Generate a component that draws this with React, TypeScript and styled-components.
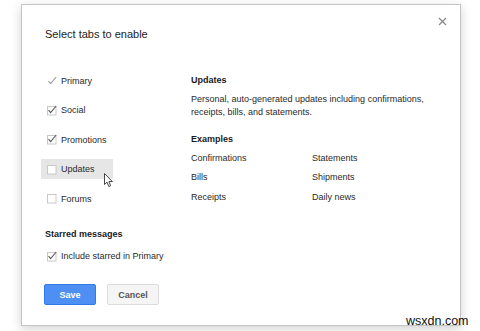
import React from "react";
import styled, { createGlobalStyle } from "styled-components";

const Global = createGlobalStyle`
  html, body { margin: 0; padding: 0; background: #ffffff; }
  body { font-family: "Liberation Sans", Arial, sans-serif; }
`;

const Page = styled.div`
  position: relative;
  width: 480px;
  height: 331px;
  overflow: hidden;
  background: #ffffff;
  padding: 4px 0 0 21px;
  box-sizing: border-box;
`;

const Dialog = styled.div`
  position: relative;
  box-sizing: border-box;
  width: 440px;
  height: 322px;
  background: #fff;
  border: 1px solid #c4c4c4;
  box-shadow: 0 3px 10px rgba(0, 0, 0, 0.18);
  padding: 22px 20px 0 23px;
  display: flex;
  flex-direction: column;
  color: #222;
`;

const Title = styled.div`
  font-size: 11px;
  line-height: 14px;
  color: #222;
`;

const Close = styled.div`
  position: absolute;
  top: 12px;
  right: 13px;
  width: 9px;
  height: 9px;
  display: flex;
`;

const Body = styled.div`
  margin-top: 30px;
  display: grid;
  grid-template-columns: 146px 1fr;
`;

const TabList = styled.div`
  display: flex;
  flex-direction: column;
  align-items: flex-start;
  gap: 9.4px;
`;

const Option = styled.div<{ $hover?: boolean }>`
  position: relative;
  display: inline-flex;
  align-items: center;
  gap: 4px;
  height: 20px;
  margin-left: -4px;
  padding: 0 18px 0 5px;
  background: ${(p) => (p.$hover ? "#e6e6e6" : "transparent")};
  font-size: 9px;
  color: #2a2a2a;
`;

const Info = styled.div`
  padding-top: 2.5px;
  font-size: 9px;
  line-height: 13px;
  color: #222;
`;

const Heading = styled.div<{ $mt?: number }>`
  font-weight: bold;
  font-size: 9px;
  line-height: 13px;
  color: #1a1a1a;
  margin-top: ${(p) => p.$mt ?? 0}px;
`;

const Desc = styled.div`
  margin-top: 6px;
  width: 245px;
  color: #2a2a2a;
`;

const Examples = styled.div`
  margin-top: 6px;
  display: grid;
  grid-template-columns: 121px 1fr;
  row-gap: 6.5px;
  color: #2a2a2a;
`;

const Starred = styled.div`
  margin-top: 19px;
  display: flex;
  flex-direction: column;
  align-items: flex-start;
  gap: 5.5px;
`;

const Buttons = styled.div`
  margin-top: 18px;
  margin-left: -1px;
  display: flex;
  gap: 11px;
`;

const Button = styled.div<{ $primary?: boolean }>`
  box-sizing: border-box;
  width: 52px;
  height: 21px;
  display: flex;
  align-items: center;
  justify-content: center;
  font-size: 9px;
  font-weight: bold;
  border-radius: 2px;
  border: 1px solid ${(p) => (p.$primary ? "#3079ed" : "#dcdcdc")};
  background: ${(p) => (p.$primary ? "#4d8ff3" : "#f5f5f5")};
  color: ${(p) => (p.$primary ? "#fff" : "#555")};
`;

const Cursor = styled.svg`
  position: absolute;
  left: 63px;
  top: 14px;
`;

const Watermark = styled.div`
  position: absolute;
  left: 406px;
  top: 313px;
  font-size: 12.5px;
  line-height: 16px;
  color: #111;
  font-family: "Liberation Sans", Arial, sans-serif;
`;

type BoxKind = "check" | "checked" | "empty";

const Box: React.FC<{ kind: BoxKind }> = ({ kind }) => (
  <svg width="11" height="11" viewBox="0 0 11 11">
    {kind !== "check" && (
      <rect x="1.5" y="1.5" width="8.5" height="8.5" fill="#fff" stroke="#c8c8c8" strokeWidth="1" />
    )}
    {kind !== "empty" && (
      <path
        d="M2.5 5.2 L4.6 7.6 L10.2 1"
        fill="none"
        stroke={kind === "check" ? "#9a9a9a" : "#5a5a5a"}
        strokeWidth="1.1"
      />
    )}
  </svg>
);

const tabs: { label: string; kind: BoxKind; hover?: boolean }[] = [
  { label: "Primary", kind: "check" },
  { label: "Social", kind: "checked" },
  { label: "Promotions", kind: "checked" },
  { label: "Updates", kind: "empty", hover: true },
  { label: "Forums", kind: "empty" },
];

const examples = ["Confirmations", "Statements", "Bills", "Shipments", "Receipts", "Daily news"];

export default function App() {
  return (
    <Page>
      <Global />
      <Dialog>
        <Close>
          <svg width="9" height="9" viewBox="0 0 9 9">
            <path d="M1 1 L8 8 M8 1 L1 8" stroke="#8a8a8a" strokeWidth="1.3" />
          </svg>
        </Close>
        <Title>Select tabs to enable</Title>
        <Body>
          <TabList>
            {tabs.map((t) => (
              <Option key={t.label} $hover={t.hover}>
                <Box kind={t.kind} />
                {t.label}
                {t.hover && (
                  <Cursor width="10" height="15" viewBox="0 0 10 15">
                    <path
                      d="M0.5 0.5 L0.5 11.5 L3 9.2 L4.8 13.5 L6.6 12.7 L4.9 8.6 L8.4 8.6 Z"
                      fill="#fff"
                      stroke="#333"
                      strokeWidth="0.9"
                      strokeLinejoin="round"
                    />
                  </Cursor>
                )}
              </Option>
            ))}
          </TabList>
          <Info>
            <Heading>Updates</Heading>
            <Desc>Personal, auto-generated updates including confirmations, receipts, bills, and statements.</Desc>
            <Heading $mt={14}>Examples</Heading>
            <Examples>
              {examples.map((e) => (
                <div key={e}>{e}</div>
              ))}
            </Examples>
          </Info>
        </Body>
        <Starred>
          <Heading>Starred messages</Heading>
          <Option>
            <Box kind="checked" />
            Include starred in Primary
          </Option>
        </Starred>
        <Buttons>
          <Button $primary>Save</Button>
          <Button>Cancel</Button>
        </Buttons>
      </Dialog>
      <Watermark>wsxdn.com</Watermark>
    </Page>
  );
}
